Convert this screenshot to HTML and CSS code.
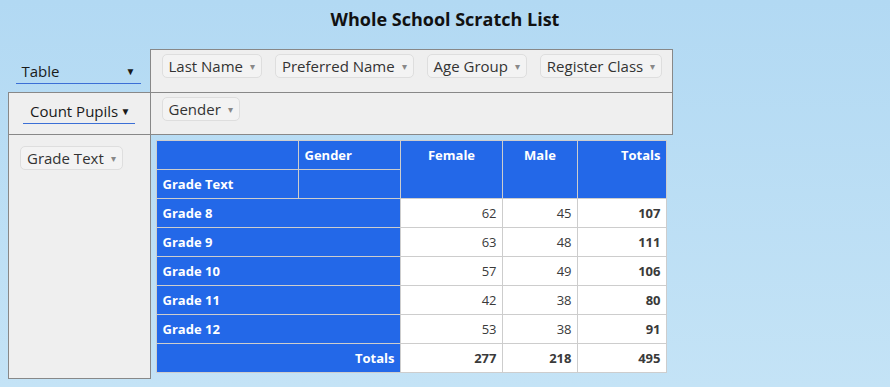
FILE: index.html
```html
<!DOCTYPE html>
<html>
<head>
    <title>Whole School Scratch List</title>
    <link rel="stylesheet" href="styles.css">
</head>
<body>
    <h1 class="title">Whole School Scratch List</h1>

    <table class="pvt-ui">
        <tr>
            <td class="pvt-renderer">
                <div class="pvt-select select-renderer">
                    <span>Table</span>
                    <span class="select-arrow">▼</span>
                </div>
            </td>
            <td class="pvt-axis pvt-unused">
                <ul class="pill-list">
                    <li class="pill">Last Name <span class="pill-arrow">▾</span></li>
                    <li class="pill">Preferred Name <span class="pill-arrow">▾</span></li>
                    <li class="pill">Age Group <span class="pill-arrow">▾</span></li>
                    <li class="pill">Register Class <span class="pill-arrow">▾</span></li>
                </ul>
            </td>
        </tr>
        <tr>
            <td class="pvt-axis pvt-vals">
                <div class="pvt-select select-aggregator">
                    <span>Count Pupils</span>
                    <span class="select-arrow">▼</span>
                </div>
            </td>
            <td class="pvt-axis pvt-cols">
                <ul class="pill-list">
                    <li class="pill">Gender <span class="pill-arrow">▾</span></li>
                </ul>
            </td>
        </tr>
        <tr>
            <td class="pvt-axis pvt-rows">
                <ul class="pill-list pill-list-vertical">
                    <li class="pill">Grade Text <span class="pill-arrow">▾</span></li>
                </ul>
            </td>
            <td class="pvt-output">
                <table class="pvt-table">
                    <colgroup>
                        <col class="w-label">
                        <col class="w-axis">
                        <col class="w-female">
                        <col class="w-male">
                        <col class="w-total">
                    </colgroup>
                    <thead>
                        <tr>
                            <th></th>
                            <th class="axis-label">Gender</th>
                            <th class="col-label" rowspan="2">Female</th>
                            <th class="col-label" rowspan="2">Male</th>
                            <th class="total-label" rowspan="2">Totals</th>
                        </tr>
                        <tr>
                            <th class="axis-label">Grade Text</th>
                            <th></th>
                        </tr>
                    </thead>
                    <tbody>
                        <tr>
                            <th class="row-label" colspan="2">Grade 8</th>
                            <td>62</td><td>45</td><td class="total">107</td>
                        </tr>
                        <tr>
                            <th class="row-label" colspan="2">Grade 9</th>
                            <td>63</td><td>48</td><td class="total">111</td>
                        </tr>
                        <tr>
                            <th class="row-label" colspan="2">Grade 10</th>
                            <td>57</td><td>49</td><td class="total">106</td>
                        </tr>
                        <tr>
                            <th class="row-label" colspan="2">Grade 11</th>
                            <td>42</td><td>38</td><td class="total">80</td>
                        </tr>
                        <tr>
                            <th class="row-label" colspan="2">Grade 12</th>
                            <td>53</td><td>38</td><td class="total">91</td>
                        </tr>
                        <tr>
                            <th class="total-label" colspan="2">Totals</th>
                            <td class="total">277</td><td class="total">218</td><td class="total">495</td>
                        </tr>
                    </tbody>
                </table>
            </td>
        </tr>
    </table>
</body>
</html>
```

FILE: styles.css
```css
html {
    background: linear-gradient(#b2d9f3, #c4e3f6);
    min-height: 100%;
}
body {
    font-family: 'Open Sans', 'Liberation Sans', sans-serif;
    margin: 0;
    padding: 7px 8px 8px 8px;
    color: #333;
}
.title {
    font-size: 18px;
    font-weight: bold;
    line-height: 24px;
    text-align: center;
    color: #111;
    margin: 0 0 18px 0;
}
.pvt-ui {
    border-collapse: collapse;
    table-layout: fixed;
}
.pvt-ui > tbody > tr > td {
    padding: 0;
    vertical-align: top;
}
.pvt-renderer {
    width: 141px;
    height: 42px;
}
.pvt-axis {
    background: #efefef;
    border: 1px solid #888;
}
.pvt-unused,
.pvt-cols {
    width: 521px;
    height: 41px;
}
.pvt-select {
    display: flex;
    justify-content: space-between;
    align-items: center;
    border-bottom: 1px solid #3b6fd6;
    font-size: 15px;
    color: #1a1a1a;
    height: 24px;
    white-space: nowrap;
}
.select-renderer {
    margin: 9px 9px 0 7px;
    padding: 0 5px 0 6px;
}
.select-aggregator {
    margin: 6px 15px 0 14px;
    padding: 0 4px 0 7px;
}
.select-arrow {
    font-size: 10px;
}
.pill-list {
    list-style: none;
    margin: 0;
    padding: 4px 0 0 11px;
    display: flex;
    gap: 13px;
}
.pvt-rows .pill-list {
    padding: 11px 0 0 11px;
}
.pill {
    font-size: 15px;
    line-height: 22px;
    padding: 0 6px;
    background: #f3f3f3;
    border: 1px solid #dedede;
    border-radius: 5px;
    color: #333;
    white-space: nowrap;
}
.pill-arrow {
    font-size: 10px;
    color: #888;
    margin-left: 3px;
    vertical-align: 2px;
}
.pvt-output {
    padding: 5px 0 6px 5px !important;
}
.pvt-table {
    border-collapse: collapse;
    table-layout: fixed;
    font-size: 13px;
    width: 510px;
}
.w-label { width: 142px; }
.w-axis { width: 102px; }
.w-female { width: 102px; }
.w-male { width: 75px; }
.w-total { width: 89px; }
.pvt-table th,
.pvt-table td {
    border: 1px solid #cdcdcd;
    padding: 5px 5px 5px 6px;
    line-height: 18px;
    height: 18px;
    vertical-align: top;
}
.pvt-table th {
    background: #2368e8;
    color: #fff;
    font-weight: bold;
    text-align: left;
}
.pvt-table .col-label {
    text-align: center;
}
.pvt-table .total-label {
    text-align: right;
}
.pvt-table td {
    background: #fff;
    color: #3a3a3a;
    text-align: right;
}
.pvt-table td.total {
    font-weight: bold;
}
```
